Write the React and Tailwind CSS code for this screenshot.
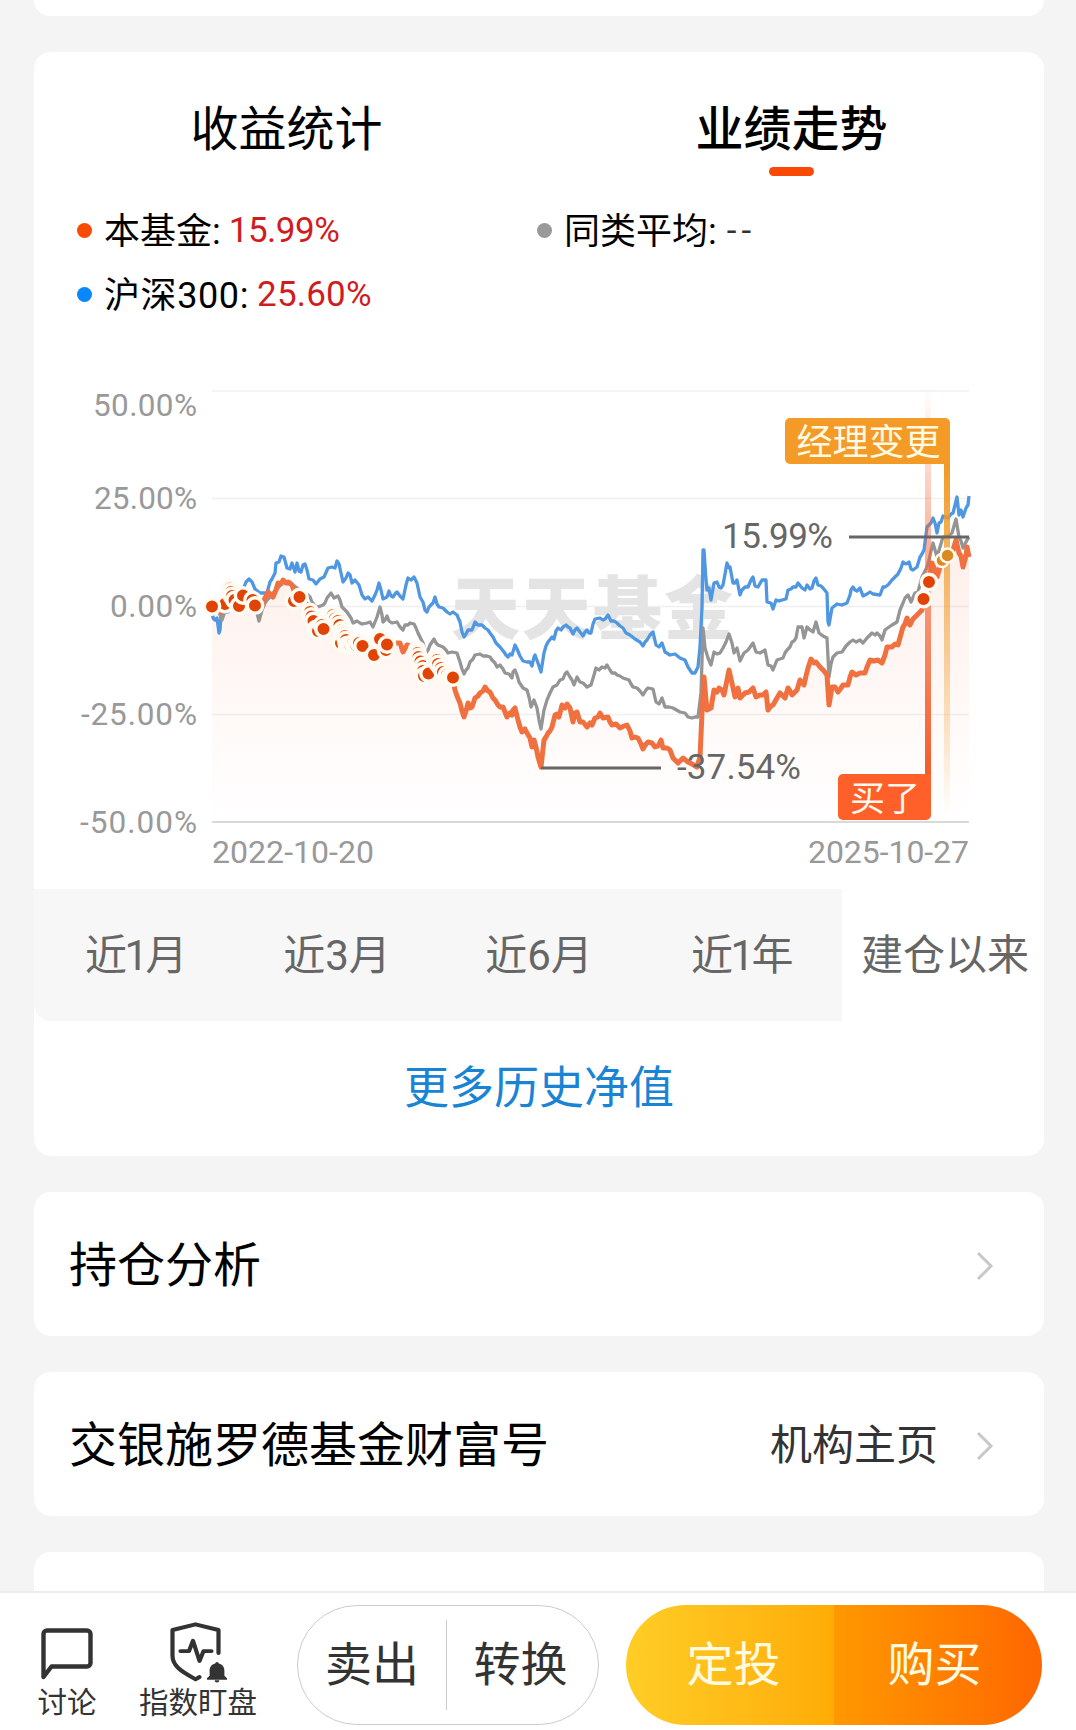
import React from 'react';

const FONT = "font-[Roboto,'Noto_Sans_CJK_SC',sans-serif]";

const legend = [
  { name: '本基金:', value: '15.99%', dot: 'bg-[#fa4a05]', color: 'text-[#cf1d1f] tracking-[-0.5px]' },
  { name: '同类平均:', value: '--', dot: 'bg-[#999999]', color: 'text-[#333333] tracking-[5px] pl-0.5' },
  { name: '沪深300:', value: '25.60%', dot: 'bg-[#0a87fa]', color: 'text-[#cf1d1f] tracking-[0.2px]', nameClass: 'tracking-[0.6px]' },
];

const periods = ['近1月', '近3月', '近6月', '近1年', '建仓以来'];

const gridLines = [391, 498.5, 606.5, 714.5];

const axisLabels = [
  { text: '50.00%', y: 416, width: 104 },
  { text: '25.00%', y: 509, width: 103 },
  { text: '0.00%', y: 617, width: 87 },
  { text: '-25.00%', y: 725, width: 116 },
  { text: '-50.00%', y: 833, width: 117 },
];

const indexLine =
  '212,606 213,618 215,620 217,618 219,633 220,630 221,616 224,613 228,612 232,604 238,596 244,587 246,582 249,579 252,582 255,589 260,593 267,593 270,582 272,579 275,573 276,563 279,562 281,556 284,557 287,568 290,569 292,563 295,572 297,563 299,571 301,572 303,565 305,564 307,570 309,579 313,580 316,584 320,579 324,577 328,568 332,567 335,568 337,561 339,564 341,573 343,582 346,578 348,573 350,575 352,583 355,580 359,585 362,595 365,599 368,597 372,601 375,595 377,590 379,583 381,590 383,599 387,597 389,591 391,596 393,597 395,594 397,592 400,596 403,599 406,585 408,578 411,580 414,577 417,583 420,597 423,602 425,610 427,612 429,607 431,605 433,603 435,597 437,604 439,607 443,608 447,612 450,614 453,612 457,615 460,622 462,632 464,637 466,634 468,630 472,630 475,622 478,625 482,625 485,628 488,630 490,633 493,637 496,643 500,647 504,652 506,655 508,657 510,654 512,655 515,645 517,649 520,656 523,661 527,662 530,662 532,666 534,657 535,655 538,663 541,672 544,653 546,646 548,642 552,637 554,639 556,631 558,628 561,630 563,627 566,625 568,627 570,628 573,634 575,630 577,628 580,632 583,636 585,632 587,630 589,633 591,633 593,624 595,619 600,618 603,620 605,619 608,615 611,621 614,621 617,623 620,626 623,628 626,633 630,635 635,639 640,642 643,646 645,642 647,640 650,635 653,632 656,645 659,647 662,643 665,652 670,655 675,654 680,658 685,660 688,667 692,673 695,673 698,667 700,647 702,607 703,550 704,550 706,580 707,590 709,588 711,600 714,583 717,582 719,587 721,588 723,585 727,563 729,568 730,567 733,583 735,583 737,580 740,595 742,590 745,587 748,587 751,580 753,577 755,586 758,587 762,580 766,580 767,602 771,603 773,609 776,600 779,601 782,600 786,599 788,590 791,589 793,587 796,587 798,583 802,588 805,590 807,585 810,589 812,588 814,581 816,578 818,585 821,586 823,588 827,593 828,622 829,625 832,608 837,604 842,605 847,603 850,595 851,590 853,587 855,590 857,591 860,588 863,596 867,594 870,592 873,594 880,595 883,587 885,587 888,585 892,580 895,577 898,574 901,568 903,562 906,564 909,562 911,569 913,570 917,567 920,557 922,554 924,550 927,527 929,525 931,523 933,518 935,523 937,533 939,523 941,522 943,516 948,518 951,514 953,513 955,505 957,497 959,515 961,510 963,517 966,508 968,505 969,496';

const peerLine =
  '212,606 215,604 219,612 222,620 226,608 232,596 238,600 245,602 251,605 257,613 259,621 262,610 265,603 267,600 270,597 273,593 278,588 283,582 288,584 293,585 300,590 308,595 310,597 312,602 315,606 318,607 323,605 325,603 327,598 331,593 334,598 338,596 340,600 342,607 347,612 349,615 351,618 353,623 357,621 360,623 362,624 367,623 370,622 373,627 375,622 377,617 380,607 382,615 383,622 385,620 387,616 389,621 392,623 397,622 400,627 403,630 405,625 408,625 410,623 414,624 416,628 418,633 421,639 423,643 425,650 427,653 430,645 432,642 434,639 436,643 438,645 443,647 446,650 448,653 452,652 457,653 460,662 462,669 464,674 466,670 468,668 470,662 473,659 475,655 480,654 483,656 487,656 490,657 492,660 495,663 497,667 500,665 503,669 505,673 509,674 512,678 513,672 515,670 517,675 519,682 523,688 527,690 529,697 531,707 534,700 537,708 539,720 541,729 544,710 547,700 550,693 553,687 557,685 560,680 563,679 565,674 567,672 570,677 572,680 574,685 577,677 580,682 583,683 587,687 591,685 594,675 596,668 599,670 602,667 605,668 607,665 610,670 612,673 615,673 617,675 620,676 623,678 629,680 631,684 633,687 637,688 640,691 643,695 646,690 648,688 653,689 656,702 659,704 662,698 665,707 669,707 673,708 680,712 685,713 688,717 692,718 695,717 698,717 701,693 703,628 705,648 708,658 711,665 714,652 717,654 720,653 723,648 726,642 729,634 732,643 734,653 737,648 740,661 744,653 748,650 753,643 756,652 760,653 765,650 768,665 771,666 773,670 777,660 783,658 785,653 787,650 790,647 792,642 794,641 796,638 798,627 802,627 804,638 807,627 810,630 813,632 816,622 819,633 823,636 827,638 829,677 831,664 833,657 837,653 842,652 846,646 850,642 853,640 856,642 860,640 863,643 867,638 872,633 875,635 877,633 880,636 882,640 885,630 889,627 892,625 897,622 900,610 903,603 905,598 908,595 911,602 915,593 918,592 922,577 924,573 927,567 929,560 931,551 933,543 937,557 940,547 943,537 948,536 952,533 954,526 956,519 959,537 961,541 963,548 967,540 969,537';

const fundLine =
  '212,606 217,604 222,612 228,600 232,592 238,600 243,597 250,597 256,605 262,605 265,598 268,592 271,595 273,597 276,590 278,583 281,584 283,580 286,583 288,582 290,583 292,585 295,593 300,597 306,603 310,613 314,620 323,629 332,620 340,626 345,634 352,643 362,646 372,653 380,640 387,645 397,643 400,643 403,652 407,645 417,648 422,662 427,674 436,662 445,668 453,680 455,690 457,696 460,703 462,711 464,717 466,711 468,703 470,708 472,707 475,698 478,696 480,693 483,691 485,687 488,691 490,692 493,698 495,700 498,705 500,707 503,707 505,712 507,717 510,713 512,715 513,710 515,708 518,720 520,727 522,732 525,729 527,733 530,738 532,747 534,740 536,747 538,757 541,767 544,740 546,737 548,733 550,731 552,727 555,715 557,714 559,717 562,705 565,708 567,704 570,708 573,722 575,713 577,712 580,722 583,722 587,727 590,723 592,725 595,718 598,717 600,713 603,718 608,717 610,722 612,725 616,724 620,728 624,726 627,725 630,731 632,738 635,737 638,738 641,744 643,749 646,744 648,742 652,743 655,747 658,746 661,740 663,748 667,748 670,750 673,758 678,763 681,760 683,758 688,762 692,764 697,767 700,757 702,713 704,677 706,700 707,710 711,708 714,690 717,692 719,688 722,690 724,695 727,680 729,670 732,683 735,697 738,688 740,698 745,693 749,692 753,688 756,697 760,695 763,695 766,692 768,710 771,706 773,705 777,698 780,693 783,696 785,698 788,688 790,691 792,695 797,690 800,680 804,685 806,676 808,668 811,659 814,663 816,662 820,667 824,671 827,675 829,705 832,687 835,687 838,692 841,688 843,685 848,685 850,677 852,672 856,675 860,673 865,673 867,667 870,660 874,661 878,660 882,663 885,655 887,647 892,647 895,644 898,645 901,634 903,627 905,624 907,618 910,625 913,619 917,615 922,610 924,599 929,582 932,563 935,570 937,577 940,567 942,562 947,555 953,550 956,540 959,553 961,556 963,567 966,556 967,547 969,557';

// later markers cover the earlier ones, so order matters here
const buys = [
  [225, 604], [230, 588.5], [231, 592], [232, 596], [234.5, 600], [239, 606], [243, 595.5], [252.5, 600], [255, 605.5],
  [294, 601], [299.5, 597], [310, 612], [311.5, 616.5], [313.5, 621], [316, 629], [318, 631], [322, 625], [323.5, 629],
  [333, 615], [335, 618.5], [338, 621], [339.5, 625], [341, 643], [342, 630], [343.5, 633], [345, 636], [346, 640],
  [347, 645], [350, 645], [353, 643.5], [356, 645], [359, 643], [362.5, 646], [380, 639], [374, 655], [386, 650],
  [387, 644.5], [417, 650], [417.5, 653], [418.5, 657], [420.5, 661.5], [423, 666], [423, 671], [424, 676], [428.5, 673.5],
  [435, 659], [437, 660], [438, 664], [441, 668], [443, 672], [447, 675], [450, 677], [453, 677.5], [212, 606.5],
  [923.5, 599], [929, 582],
];

function TrendChart() {
  return (
    <svg viewBox="34 348 1010 541" width="1010" height="541" className="block">
      <defs>
        <linearGradient id="area" gradientUnits="userSpaceOnUse" x1="0" y1="540" x2="0" y2="822">
          <stop offset="0" stopColor="#f5602c" stopOpacity="0.1" />
          <stop offset="1" stopColor="#f5602c" stopOpacity="0" />
        </linearGradient>
        <linearGradient id="buyStem" gradientUnits="userSpaceOnUse" x1="0" y1="390" x2="0" y2="776">
          <stop offset="0" stopColor="#f45a28" stopOpacity="0" />
          <stop offset="0.5" stopColor="#f4622f" stopOpacity="0.6" />
          <stop offset="1" stopColor="#f45a28" />
        </linearGradient>
        <linearGradient id="managerStem" gradientUnits="userSpaceOnUse" x1="0" y1="462" x2="0" y2="815">
          <stop offset="0" stopColor="#f09a26" />
          <stop offset="1" stopColor="#f09a26" stopOpacity="0" />
        </linearGradient>
      </defs>

      {gridLines.map((y) => (
        <line key={y} x1="212" x2="969" y1={y} y2={y} stroke="#f0f0f0" strokeWidth="1.5" />
      ))}
      <line x1="212" x2="969" y1="822" y2="822" stroke="#d9d9d9" strokeWidth="2" />

      <text x="451" y="634" fontSize="69" fontWeight="900" letterSpacing="2" fill="#e4e4e4">天天基金</text>

      <polygon points={`212,822 ${fundLine} 969,822`} fill="url(#area)" />
      <g fill="none" strokeLinejoin="round">
        <polyline points={indexLine} stroke="#4f97e3" strokeWidth="3.3" />
        <polyline points={peerLine} stroke="#959595" strokeWidth="3.3" />
        <polyline points={fundLine} stroke="#f0703f" strokeWidth="5" />
      </g>

      {axisLabels.map((l) => (
        <text key={l.text} x={197 - l.width} y={l.y} fontSize="31.5" fill="#999999" textLength={l.width}>{l.text}</text>
      ))}
      <text x="212" y="863" fontSize="32" fill="#999999" textLength="162">2022-10-20</text>
      <text x="808" y="863" fontSize="32" fill="#999999" textLength="161">2025-10-27</text>

      <rect x="925" y="390" width="6" height="386" fill="url(#buyStem)" />
      <rect x="944" y="462" width="6" height="353" fill="url(#managerStem)" />

      <g stroke="#666666" strokeWidth="3">
        <line x1="849" x2="969" y1="537" y2="537" />
        <line x1="541" x2="661" y1="768" y2="768" />
      </g>
      <text x="722" y="548" fontSize="35" fill="#666666" textLength="111">15.99%</text>
      <text x="677" y="779" fontSize="35" fill="#666666" textLength="124">-37.54%</text>

      <path d="M790 418h155a5 5 0 0 1 5 5v41H790a5 5 0 0 1-5-5v-36a5 5 0 0 1 5-5z" fill="#f39a27" />
      <text x="796.5" y="455" fontSize="36" fill="#fffbe3">经理变更</text>
      <path d="M843 774h88v41a5 5 0 0 1-5 5h-83a5 5 0 0 1-5-5v-36a5 5 0 0 1 5-5z" fill="#ff5f28" />
      <text x="850" y="810.5" fontSize="35" fill="#fff6ee">买了</text>

      <g fill="#e04303" stroke="#fffaf2" strokeWidth="3.4">
        {buys.map(([x, y], i) => (
          <circle key={i} cx={x} cy={y} r="7.7" />
        ))}
      </g>
      <g fill="#db8b1e" stroke="#fffaf2" strokeWidth="2.5">
        <circle cx="942" cy="560.5" r="6.5" />
        <circle cx="947.5" cy="555.5" r="7" />
      </g>
    </svg>
  );
}

function Chevron() {
  return (
    <svg width="18" height="30" viewBox="0 0 18 30" fill="none" stroke="#c8c8c8" strokeWidth="3">
      <path d="M2 2l13 13L2 28" />
    </svg>
  );
}

function LinkCard({ title, extra }) {
  return (
    <div className="flex h-36 shrink-0 items-center rounded-[17px] bg-white pt-[3px] pr-[50px] pl-[35px]">
      <span className="flex-1 text-[48px] leading-none text-black">{title}</span>
      {extra && <span className="mr-[38px] text-[42px] leading-none text-[#333333]">{extra}</span>}
      <Chevron />
    </div>
  );
}

function ChatIcon() {
  return (
    <svg width="52" height="52" viewBox="0 0 52 52" fill="none" stroke="#333333" strokeWidth="4.4" strokeLinejoin="round">
      <path d="M2.5 49V6A3.500 3.500 0 0 1 6 2.500h40A3.500 3.500 0 0 1 49.500 6v29a3.500 3.500 0 0 1-3.500 3.500H10.500z" />
    </svg>
  );
}

function WatchIcon() {
  return (
    <svg
      width="58"
      height="62"
      viewBox="0 0 58 66"
      preserveAspectRatio="none"
      fill="none"
      stroke="#333333"
      strokeWidth="4.2"
      strokeLinecap="round"
      strokeLinejoin="round"
    >
      <path d="M48.500 33V8.500L25.500 2.500L2.500 8.500V36C2.500 48 14 54 25.500 61L29.500 58.500" />
      <path d="M10.500 31h8.500l4-11l6.500 21.500l4-10.500h8" />
      <path
        d="M47 42.500c1.200 0 1.600.8 1.800 1.600 3.800.9 5.600 3.900 5.600 7.900v5.200l2.600 2.800v1.500H37v-1.500l2.600-2.800V52c0-4 1.800-7 5.600-7.900.2-.8.600-1.600 1.800-1.600zM44.600 62h4.800a2.400 2.400 0 0 1-4.800 0z"
        fill="#333333"
        stroke="none"
      />
    </svg>
  );
}

function BottomBar() {
  return (
    <div className="flex h-[139px] shrink-0 border-t-2 border-[#ececec] bg-white pt-3">
      <button className="ml-9 flex w-[62px] flex-col items-center pt-[23px]">
        <ChatIcon />
        <span className="mt-2 text-[29.500px] leading-[30px] whitespace-nowrap text-[#333333]">讨论</span>
      </button>
      <button className="ml-10 flex w-[120px] flex-col items-center pt-[17px]">
        <span className="pl-0.5">
          <WatchIcon />
        </span>
        <span className="mt-1 text-[29.500px] leading-[30px] whitespace-nowrap text-[#333333]">指数盯盘</span>
      </button>
      <div className="ml-[39px] flex h-[120px] w-[302px] items-center rounded-full border-[1.500px] border-[#cccccc] text-[47px] text-[#333333]">
        <button className="w-[148px]">卖出</button>
        <div className="h-[90px] w-px bg-[#cccccc]" />
        <button className="flex-1 pr-1">转换</button>
      </div>
      <div className="ml-[27px] flex h-[120px] w-[416px] overflow-hidden rounded-full text-[47px] text-[#fffbe0]">
        <button className="flex-1 bg-linear-to-r from-[#ffcd25] to-[#ffac05] pl-[7px]">定投</button>
        <button className="flex-1 bg-linear-to-r from-[#ff9800] to-[#ff6600] pr-[7px]">购买</button>
      </div>
    </div>
  );
}

export default function App() {
  return (
    <div className={`flex h-[1730px] w-[1076px] flex-col overflow-hidden bg-[#f4f4f4] ${FONT}`}>
      <div className="flex min-h-0 flex-1 flex-col overflow-hidden pr-8 pl-[34px]">
        <div className="h-4 shrink-0 rounded-b-[17px] bg-white" />

        <div className="mt-9 h-[1104px] shrink-0 overflow-hidden rounded-[17px] bg-white">
          <div className="grid h-[146px] grid-cols-2 pt-[46px] text-[48px] text-black">
            <div className="flex flex-col items-center">
              <span className="leading-[64px]">收益统计</span>
            </div>
            <div className="flex flex-col items-center">
              <span className="leading-[64px] font-medium">业绩走势</span>
              <span className="mt-[5px] h-[9px] w-[45px] rounded-full bg-[#fa4805]" />
            </div>
          </div>

          <div className="grid h-[150px] grid-cols-[460px_1fr] content-start pl-[43px]">
            {legend.map((item) => (
              <div key={item.name} className="flex h-16 items-center text-[36px]">
                <span className={`mr-3 size-[15px] rounded-full ${item.dot}`} />
                <span className={`pt-[3px] text-black ${item.nameClass || ''}`}>{item.name}</span>
                <span className={`ml-2 pt-[3px] text-[35px] ${item.color}`}>{item.value}</span>
              </div>
            ))}
          </div>

          <TrendChart />

          <div className="grid h-[132px] grid-cols-5 text-[42px] text-[#666666]">
            {periods.map((p, i) => (
              <button
                key={p}
                className={`whitespace-nowrap ${i === 4 ? 'bg-white pl-1' : 'bg-[#f7f7f7]'} ${i === 0 ? 'rounded-bl-[17px]' : ''} ${p.includes('1') ? 'tracking-[-2.500px]' : ''}`}
              >
                {p}
              </button>
            ))}
          </div>

          <div className="flex h-[135px] items-center justify-center text-[45px] text-[#1a84d4]">更多历史净值</div>
        </div>

        <div className="mt-9 flex shrink-0 flex-col gap-9">
          <LinkCard title="持仓分析" />
          <LinkCard title="交银施罗德基金财富号" extra="机构主页" />
          <div className="h-36 rounded-[17px] bg-white" />
        </div>
      </div>

      <BottomBar />
    </div>
  );
}
